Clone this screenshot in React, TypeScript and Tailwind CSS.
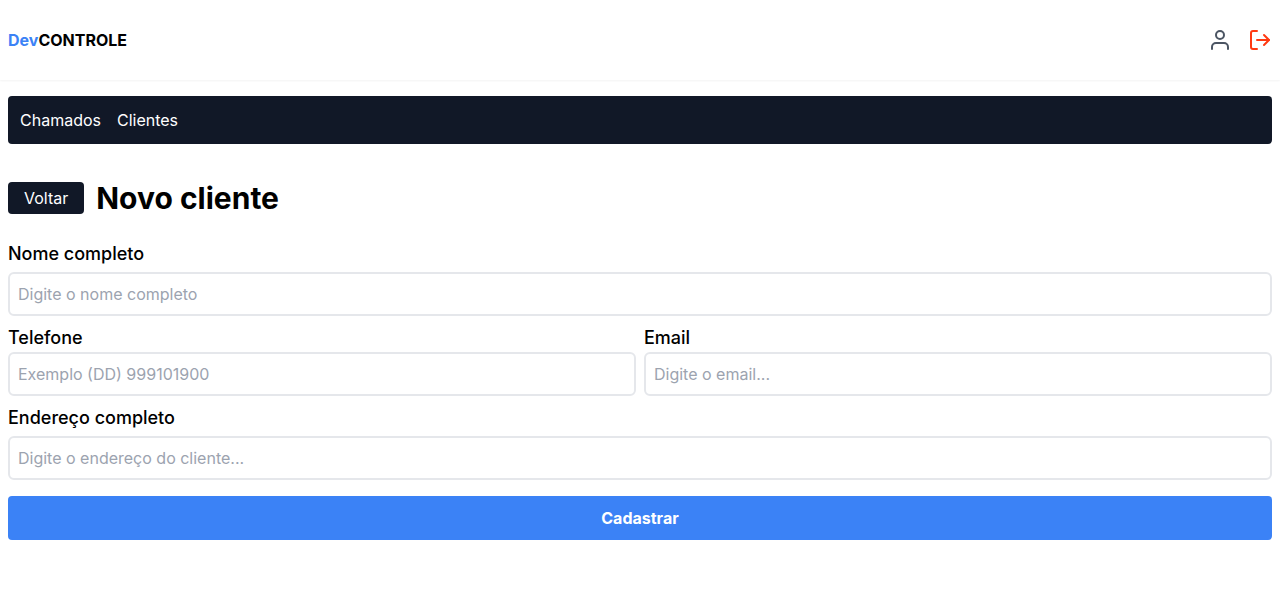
import { FiLogOut, FiUser } from "react-icons/fi";

const inputClass =
  "block h-11 w-full rounded-md border-2 border-[#e5e7eb] bg-white px-2 text-base text-black placeholder:text-[#9ca3af]";
const labelClass = "block text-lg font-medium";

function Header() {
  return (
    <header className="flex h-20 w-full items-center bg-white px-2 shadow-[0_1px_2px_0_rgb(0_0_0/0.05)]">
      <div className="mx-auto flex w-full max-w-7xl items-center justify-between">
        <a href="#" className="font-bold">
          <span className="text-[#3b82f6]">Dev</span>CONTROLE
        </a>
        <div className="flex items-center gap-4">
          <a href="#" aria-label="Perfil">
            <FiUser size={24} color="#4b5563" />
          </a>
          <button type="button" aria-label="Sair">
            <FiLogOut size={24} color="#ff3a13" />
          </button>
        </div>
      </div>
    </header>
  );
}

export default function App() {
  return (
    <div className="font-['Inter',sans-serif] text-black">
      <Header />
      <main className="mx-auto w-full max-w-7xl px-2">
        <nav className="my-4 flex h-12 items-center gap-4 rounded-sm bg-[#111827] px-3 text-white">
          <a href="#">Chamados</a>
          <a href="#">Clientes</a>
        </nav>
        <div className="mt-9 flex items-center gap-3">
          <a href="#" className="rounded-sm bg-[#111827] px-4 py-1 text-white">Voltar</a>
          <h1 className="text-3xl font-bold">Novo cliente</h1>
        </div>
        <form className="mt-6 flex flex-col">
          <label htmlFor="name" className={labelClass + " mb-1"}>Nome completo</label>
          <input id="name" type="text" placeholder="Digite o nome completo" className={inputClass} />
          <div className="my-2 flex gap-2">
            <div className="flex-1">
              <label htmlFor="phone" className={labelClass}>Telefone</label>
              <input id="phone" type="tel" placeholder="Exemplo (DD) 999101900" className={inputClass} />
            </div>
            <div className="flex-1">
              <label htmlFor="email" className={labelClass}>Email</label>
              <input id="email" type="email" placeholder="Digite o email..." className={inputClass} />
            </div>
          </div>
          <label htmlFor="address" className={labelClass + " mb-1"}>Endereço completo</label>
          <input id="address" type="text" placeholder="Digite o endereço do cliente..." className={inputClass} />
          <button type="submit" className="my-4 h-11 rounded-sm bg-[#3b82f6] px-2 font-bold text-white">
            Cadastrar
          </button>
        </form>
      </main>
    </div>
  );
}
